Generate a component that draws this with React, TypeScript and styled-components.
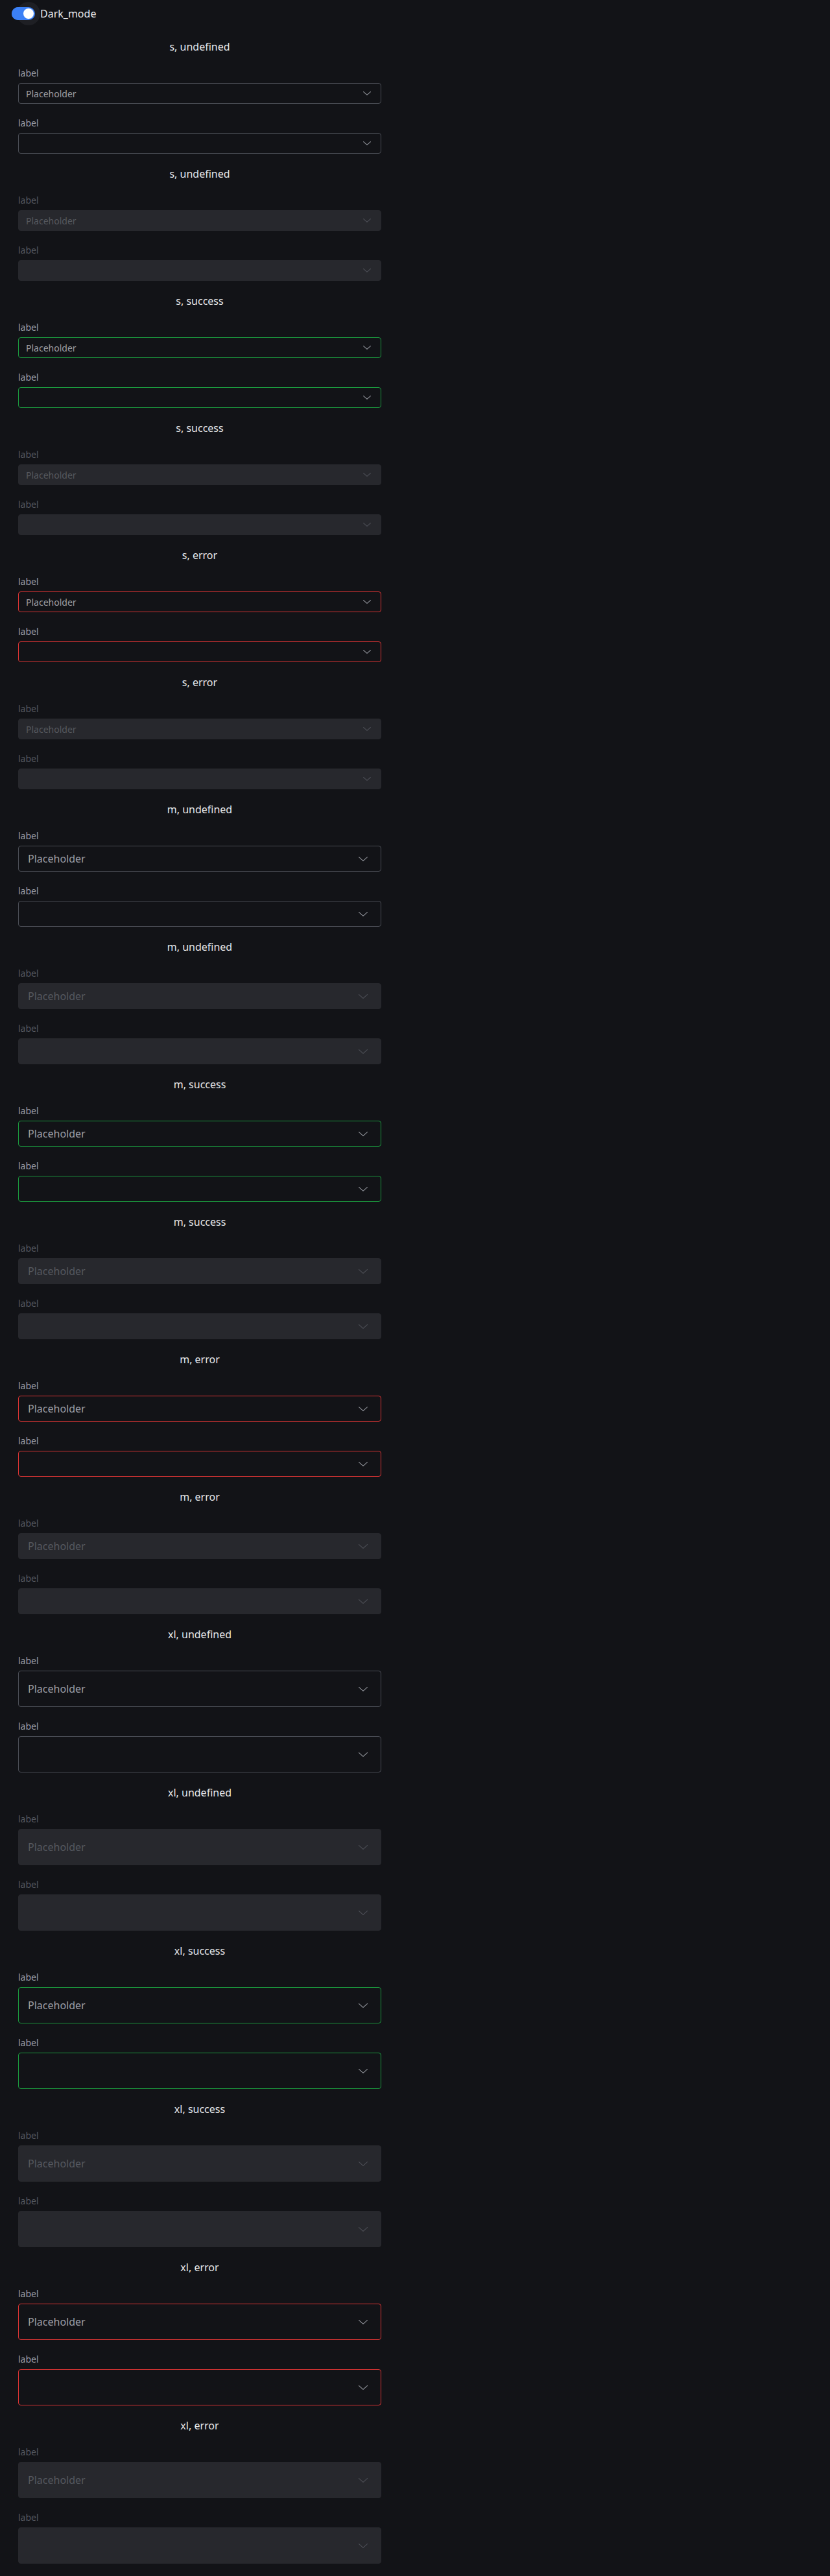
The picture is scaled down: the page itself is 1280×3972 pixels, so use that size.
import styled, { createGlobalStyle } from "styled-components";

type Size = "s" | "m" | "xl";
type Status = "undefined" | "success" | "error";

const SIZES: Record<
  Size,
  { height: number; font: number; padLeft: number; padRight: number; iconW: number; iconH: number }
> = {
  s: { height: 32, font: 14, padLeft: 11, padRight: 15, iconW: 12, iconH: 6 },
  m: { height: 40, font: 16, padLeft: 14, padRight: 20, iconW: 14, iconH: 7 },
  xl: { height: 56, font: 16, padLeft: 14, padRight: 20, iconW: 14, iconH: 7 },
};

const BORDERS: Record<Status, string> = {
  undefined: "#4b4e56",
  success: "#1b9a3e",
  error: "#dc3434",
};

const GlobalStyle = createGlobalStyle`
  html, body {
    margin: 0;
    padding: 0;
    background: #121317;
  }
  body {
    font-family: "Noto Sans", "Open Sans", sans-serif;
    color: #e4e5e8;
  }
`;

const Page = styled.div`
  display: flex;
  flex-direction: column;
  gap: 20px;
  padding-bottom: 19px;
  background: #121317;
`;

const Header = styled.div`
  display: flex;
  align-items: center;
  gap: 8px;
  height: 41px;
  padding-left: 18px;
`;

const Switch = styled.span`
  position: relative;
  display: inline-flex;
  align-items: center;
  justify-content: flex-end;
  width: 36px;
  height: 20px;
  padding: 0 2px;
  box-sizing: border-box;
  border-radius: 10px;
  background: #3b80f6;
`;

const Halo = styled.span`
  position: absolute;
  right: -8px;
  top: 50%;
  width: 36px;
  height: 36px;
  margin-top: -18px;
  border-radius: 50%;
  background: #1e1f24;
  z-index: 0;
`;

const Track = styled.span`
  position: absolute;
  inset: 0;
  border-radius: 10px;
  background: #3b80f6;
  z-index: 1;
`;

const Knob = styled.span`
  position: relative;
  z-index: 2;
  width: 16px;
  height: 16px;
  border-radius: 50%;
  background: #ffffff;
`;

const SwitchLabel = styled.span`
  font-size: 16px;
  line-height: 22px;
  color: #e6e7ea;
`;

const Column = styled.div`
  display: flex;
  flex-direction: column;
  gap: 20px;
  width: 560px;
  margin-left: 28px;
`;

const Title = styled.div`
  font-size: 16px;
  line-height: 22px;
  text-align: center;
  color: #e6e7ea;
`;

const Field = styled.div`
  display: flex;
  flex-direction: column;
  gap: 6px;
`;

const Label = styled.label<{ $disabled: boolean }>`
  font-size: 14px;
  line-height: 19px;
  color: ${(p) => (p.$disabled ? "#55585f" : "#9c9ea5")};
`;

const Box = styled.button<{ $size: Size; $status: Status }>`
  display: flex;
  align-items: center;
  justify-content: space-between;
  width: 100%;
  height: ${(p) => SIZES[p.$size].height}px;
  padding: 0 ${(p) => SIZES[p.$size].padRight}px 0 ${(p) => SIZES[p.$size].padLeft}px;
  box-sizing: border-box;
  border: 1px solid ${(p) => BORDERS[p.$status]};
  border-radius: 4px;
  background: transparent;
  font-family: "Noto Sans", "Open Sans", sans-serif;
  font-size: ${(p) => SIZES[p.$size].font}px;
  color: #9c9ea5;
  text-align: left;
  cursor: pointer;

  &:disabled {
    border-color: #27282d;
    background: #27282d;
    color: #55585f;
    cursor: default;
  }
`;

const Chevron = styled.svg<{ $disabled: boolean }>`
  flex-shrink: 0;
  stroke: ${(p) => (p.$disabled ? "#4c4e55" : "#8d9097")};
`;

const Placeholder = styled.span`
  white-space: nowrap;
`;

type SelectProps = {
  size: Size;
  status: Status;
  disabled: boolean;
  placeholder?: string;
};

const Select = ({ size, status, disabled, placeholder }: SelectProps) => {
  const { iconW, iconH } = SIZES[size];
  return (
    <Field>
      <Label $disabled={disabled}>label</Label>
      <Box type="button" $size={size} $status={status} disabled={disabled}>
        <Placeholder>{placeholder ?? ""}</Placeholder>
        <Chevron
          $disabled={disabled}
          width={iconW}
          height={iconH}
          viewBox={`0 0 ${iconW} ${iconH}`}
          fill="none"
          strokeWidth={1.2}
          strokeLinecap="round"
          strokeLinejoin="round"
        >
          <polyline points={`0.6 0.6 ${iconW / 2} ${iconH - 0.6} ${iconW - 0.6} 0.6`} />
        </Chevron>
      </Box>
    </Field>
  );
};

const SECTIONS: { size: Size; status: Status; disabled: boolean }[] = [];
(["s", "m", "xl"] as Size[]).forEach((size) => {
  (["undefined", "success", "error"] as Status[]).forEach((status) => {
    SECTIONS.push({ size, status, disabled: false });
    SECTIONS.push({ size, status, disabled: true });
  });
});

export default function App() {
  return (
    <>
      <GlobalStyle />
      <Page>
        <Header>
          <Switch>
            <Halo />
            <Track />
            <Knob />
          </Switch>
          <SwitchLabel>Dark_mode</SwitchLabel>
        </Header>
        <Column>
          {SECTIONS.map((s, i) => (
            <Section key={i} {...s} />
          ))}
        </Column>
      </Page>
    </>
  );
}

const SectionWrap = styled.div`
  display: contents;
`;

const Section = ({ size, status, disabled }: { size: Size; status: Status; disabled: boolean }) => (
  <SectionWrap>
    <Title>
      {size}, {status}
    </Title>
    <Select size={size} status={status} disabled={disabled} placeholder="Placeholder" />
    <Select size={size} status={status} disabled={disabled} />
  </SectionWrap>
);
